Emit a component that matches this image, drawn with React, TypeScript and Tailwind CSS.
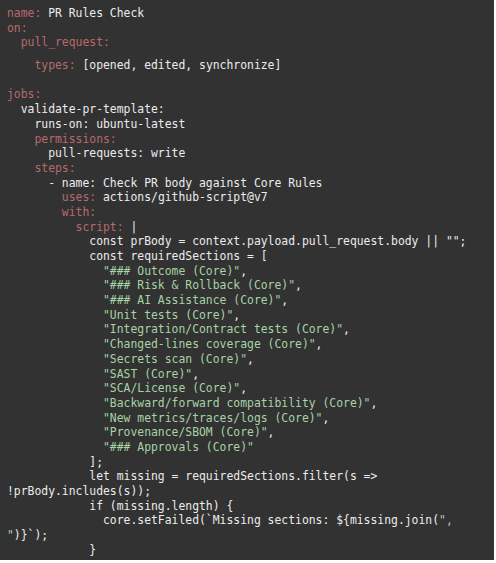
type Seg = [string, "k" | "t" | "s"];

const K = "text-[#b76a6c]";
const T = "text-[#ececec]";
const S = "text-[#a6d4a4]";

const lines: { segs: Seg[]; gap?: boolean }[] = [
  { segs: [["name:", "k"], [" PR Rules Check", "t"]] },
  { segs: [["on:", "k"]] },
  { segs: [["  pull_request:", "k"]] },
  { segs: [["    types:", "k"], [" [opened, edited, synchronize]", "t"]], gap: true },
  { segs: [[" ", "t"]] },
  { segs: [["jobs:", "k"]] },
  { segs: [["  validate-pr-template:", "t"]] },
  { segs: [["    runs-on: ubuntu-latest", "t"]] },
  { segs: [["    permissions:", "k"]] },
  { segs: [["      pull-requests: write", "t"]] },
  { segs: [["    steps:", "k"]] },
  { segs: [["      - name: Check PR body against Core Rules", "t"]] },
  { segs: [["        uses:", "k"], [" actions/github-script@v7", "t"]] },
  { segs: [["        with:", "k"]] },
  { segs: [["          script:", "k"], [" |", "t"]] },
  { segs: [["            const prBody = context.payload.pull_request.body || \"\";", "t"]] },
  { segs: [["            const requiredSections = [", "t"]] },
  { segs: [["              \"### Outcome (Core)\"", "s"], [",", "t"]] },
  { segs: [["              \"### Risk & Rollback (Core)\"", "s"], [",", "t"]] },
  { segs: [["              \"### AI Assistance (Core)\"", "s"], [",", "t"]] },
  { segs: [["              \"Unit tests (Core)\"", "s"], [",", "t"]] },
  { segs: [["              \"Integration/Contract tests (Core)\"", "s"], [",", "t"]] },
  { segs: [["              \"Changed-lines coverage (Core)\"", "s"], [",", "t"]] },
  { segs: [["              \"Secrets scan (Core)\"", "s"], [",", "t"]] },
  { segs: [["              \"SAST (Core)\"", "s"], [",", "t"]] },
  { segs: [["              \"SCA/License (Core)\"", "s"], [",", "t"]] },
  { segs: [["              \"Backward/forward compatibility (Core)\"", "s"], [",", "t"]] },
  { segs: [["              \"New metrics/traces/logs (Core)\"", "s"], [",", "t"]] },
  { segs: [["              \"Provenance/SBOM (Core)\"", "s"], [",", "t"]] },
  { segs: [["              \"### Approvals (Core)\"", "s"]] },
  { segs: [["            ];", "t"]] },
  { segs: [["            let missing = requiredSections.filter(s =>", "t"]] },
  { segs: [["!prBody.includes(s));", "t"]] },
  { segs: [["            if (missing.length) {", "t"]] },
  { segs: [["              core.setFailed(`Missing sections: ${missing.join(", "t"], ["\",", "s"]] },
  { segs: [["\"", "s"], [")}`);", "t"]] },
  { segs: [["            }", "t"]] },
];

const cls = { k: K, t: T, s: S };

export default function App() {
  return (
    <div className="w-[496px] h-[563px] bg-white">
      <div
        className="w-[494px] h-[560px] bg-[#323232] pt-[6px] pl-[7px] text-[11.4px] leading-[14.68px] whitespace-pre"
        style={{ fontFamily: '"DejaVu Sans Mono", "Liberation Mono", monospace' }}
      >
        {lines.map((l, i) => (
          <div key={i} className={l.gap ? "mt-[8px]" : ""}>
            {l.segs.map(([txt, c], j) => (
              <span key={j} className={cls[c]}>
                {txt}
              </span>
            ))}
          </div>
        ))}
      </div>
    </div>
  );
}
